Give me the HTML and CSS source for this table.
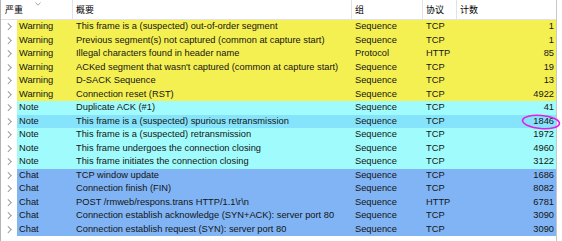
FILE: index.html
```html
<!DOCTYPE html>
<html lang="zh">
<head>
<meta charset="utf-8">
<title>Expert Info</title>
<link rel="stylesheet" href="styles.css">
</head>
<body>
<div class="view">
  <div class="header">
    <div class="hcell h-sev">严重
      <svg class="sort" width="6" height="4" viewBox="0 0 6 4"><polyline points="0.5,0.5 3,3.2 5.5,0.5" fill="none" stroke="#a8a8a8" stroke-width="1"/></svg>
    </div>
    <div class="hcell">概要</div>
    <div class="hcell">组</div>
    <div class="hcell">协议</div>
    <div class="hcell last">计数</div>
  </div>
  <div class="rows">
    <div class="row warn"><span class="chev"></span><span>Warning</span><span>This frame is a (suspected) out-of-order segment</span><span>Sequence</span><span>TCP</span><span class="num">1</span></div>
    <div class="row warn"><span class="chev"></span><span>Warning</span><span>Previous segment(s) not captured (common at capture start)</span><span>Sequence</span><span>TCP</span><span class="num">1</span></div>
    <div class="row warn"><span class="chev"></span><span>Warning</span><span>Illegal characters found in header name</span><span>Protocol</span><span>HTTP</span><span class="num">85</span></div>
    <div class="row warn"><span class="chev"></span><span>Warning</span><span>ACKed segment that wasn't captured (common at capture start)</span><span>Sequence</span><span>TCP</span><span class="num">19</span></div>
    <div class="row warn"><span class="chev"></span><span>Warning</span><span>D-SACK Sequence</span><span>Sequence</span><span>TCP</span><span class="num">13</span></div>
    <div class="row warn"><span class="chev"></span><span>Warning</span><span>Connection reset (RST)</span><span>Sequence</span><span>TCP</span><span class="num">4922</span></div>
    <div class="row note"><span class="chev"></span><span>Note</span><span>Duplicate ACK (#1)</span><span>Sequence</span><span>TCP</span><span class="num">41</span></div>
    <div class="row note selected"><span class="chev"></span><span>Note</span><span>This frame is a (suspected) spurious retransmission</span><span>Sequence</span><span>TCP</span><span class="num">1846</span></div>
    <div class="row note"><span class="chev"></span><span>Note</span><span>This frame is a (suspected) retransmission</span><span>Sequence</span><span>TCP</span><span class="num">1972</span></div>
    <div class="row note"><span class="chev"></span><span>Note</span><span>This frame undergoes the connection closing</span><span>Sequence</span><span>TCP</span><span class="num">4960</span></div>
    <div class="row note"><span class="chev"></span><span>Note</span><span>This frame initiates the connection closing</span><span>Sequence</span><span>TCP</span><span class="num">3122</span></div>
    <div class="row chat"><span class="chev"></span><span>Chat</span><span>TCP window update</span><span>Sequence</span><span>TCP</span><span class="num">1686</span></div>
    <div class="row chat"><span class="chev"></span><span>Chat</span><span>Connection finish (FIN)</span><span>Sequence</span><span>TCP</span><span class="num">8082</span></div>
    <div class="row chat"><span class="chev"></span><span>Chat</span><span>POST /rmweb/respons.trans HTTP/1.1\r\n</span><span>Sequence</span><span>HTTP</span><span class="num">6781</span></div>
    <div class="row chat"><span class="chev"></span><span>Chat</span><span>Connection establish acknowledge (SYN+ACK): server port 80</span><span>Sequence</span><span>TCP</span><span class="num">3090</span></div>
    <div class="row chat"><span class="chev"></span><span>Chat</span><span>Connection establish request (SYN): server port 80</span><span>Sequence</span><span>TCP</span><span class="num">3090</span></div>
  </div>
  <svg class="mark" width="42" height="18" viewBox="0 0 42 18"><ellipse cx="21" cy="9" rx="18.5" ry="6.5" transform="rotate(5 21 9)" fill="none" stroke="#e31fe3" stroke-width="1.6"/></svg>
</div>
</body>
</html>
```

FILE: styles.css
```css
html, body {
  margin: 0;
  padding: 0;
  background: #ffffff;
}

body {
  font-family: "Liberation Sans", Arial, "Noto Sans CJK SC", sans-serif;
  font-size: 9.3px;
  color: #141414;
}

.view {
  position: relative;
  width: 555px;
  height: 241px;
  border-left: 1px solid #b4b4b4;
  border-right: 1px solid #c8c8c8;
}

.header {
  display: grid;
  grid-template-columns: 72px 279px 71px 34px 99px;
  height: 20px;
  border-bottom: 1px solid #e2e2e2;
  box-sizing: border-box;
}

.hcell {
  position: relative;
  font-family: "Noto Sans CJK SC", sans-serif;
  font-size: 9px;
  line-height: 20px;
  padding-left: 3px;
  border-right: 1px solid #e2e2e2;
  color: #000;
}

.hcell.h-sev {
  padding-left: 4px;
}

.hcell.last {
  border-right: none;
}

.sort {
  position: absolute;
  left: 34px;
  top: 2px;
}

.rows {
  display: flex;
  flex-direction: column;
}

.row {
  display: grid;
  grid-template-columns: 16px 56px 279px 71px 34px 99px;
  height: 13.5px;
  line-height: 13.5px;
  white-space: nowrap;
}

.row > span {
  padding-left: 3px;
  overflow: hidden;
}

.row > span:nth-child(2) {
  padding-left: 2px;
}

.row > .chev {
  background: #ffffff;
  padding: 0;
  position: relative;
}

.row > .chev::before {
  content: "";
  position: absolute;
  left: 5px;
  top: 4px;
  width: 3.5px;
  height: 3.5px;
  border-right: 1px solid #9a9a9a;
  border-top: 1px solid #9a9a9a;
  transform: rotate(45deg);
}

.row > .num {
  text-align: right;
  padding-left: 0;
  padding-right: 2px;
}

.row.warn > span:not(.chev) { background: #f5f052; }
.row.note > span:not(.chev) { background: #a0fcfc; }
.row.note.selected > span:not(.chev) { background: #85e4fb; }
.row.chat > span:not(.chev) { background: #80b4f4; }

.mark {
  position: absolute;
  left: 519px;
  top: 113px;
}
```
